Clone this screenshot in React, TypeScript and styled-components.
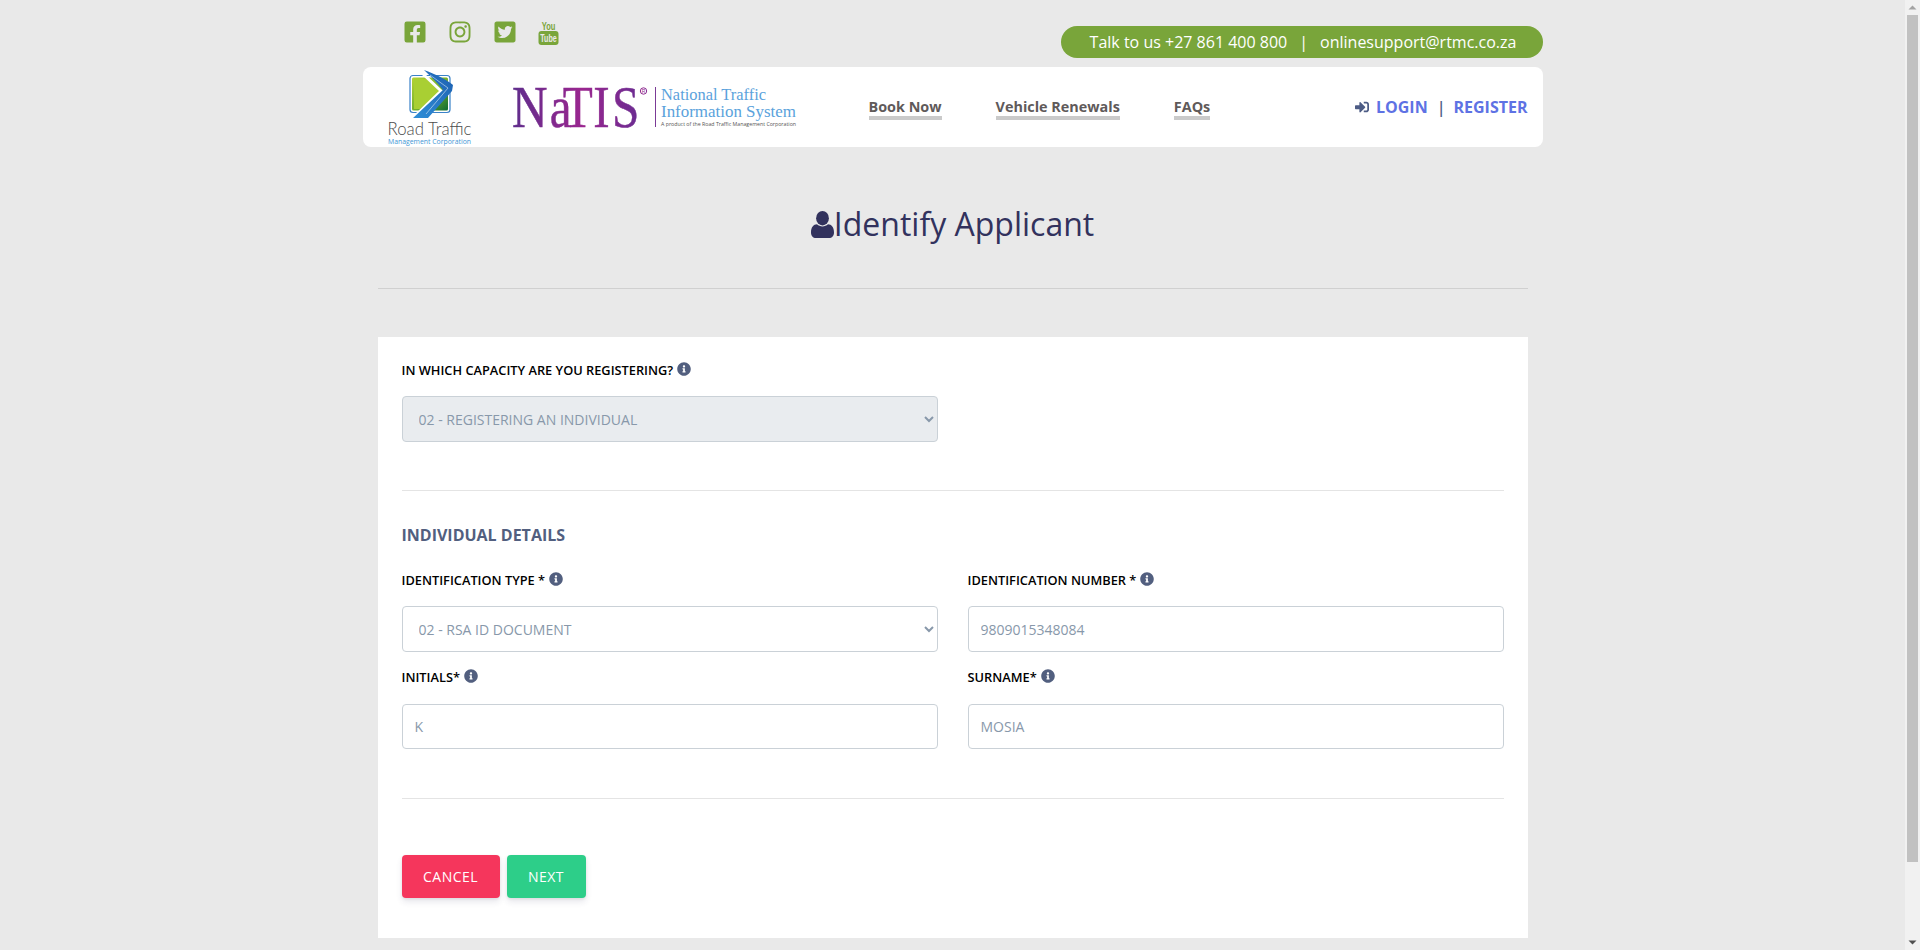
import React from "react";
import styled, { createGlobalStyle } from "styled-components";
import { FaFacebookSquare, FaInstagram, FaTwitterSquare, FaSignInAlt, FaInfoCircle } from "react-icons/fa";

const Global = createGlobalStyle`
  html, body { margin: 0; padding: 0; background: #e9e9e9; height: 100%; overflow: hidden; }
  body { font-family: "Open Sans", "Liberation Sans", sans-serif; }
  #root { height: 100%; }
  * { box-sizing: border-box; }
`;

const Shell = styled.div`
  display: flex;
  height: 100vh;
  overflow: hidden;
`;

const Page = styled.div`
  flex: 1;
  min-width: 0;
  height: 100%;
  overflow-y: auto;
  scrollbar-width: none;
  background: #e9e9e9;
`;

const Content = styled.div`
  min-height: 1032px;
  padding-bottom: 94px;
`;

const ScrollTrack = styled.aside`
  flex: none;
  width: 15px;
  height: 100%;
  background: #f1f1f1;
  display: flex;
  flex-direction: column;
  align-items: center;
`;

const ScrollButton = styled.div`
  flex: none;
  height: 15px;
  display: flex;
  align-items: center;
  justify-content: center;
`;

const ScrollThumb = styled.div`
  width: 11px;
  height: 847px;
  background: #c1c1c1;
`;

const ScrollSpacer = styled.div`
  flex: 1;
`;

const Header = styled.header`
  width: 1180px;
  margin: 0 auto;
`;

const TopBar = styled.div`
  height: 67px;
  display: flex;
  justify-content: space-between;
  align-items: flex-start;
`;

const Social = styled.div`
  display: flex;
  align-items: flex-start;
  gap: 21px;
  padding: 20px 0 0 40px;
  color: #79a53a;
  font-size: 24px;
  svg { display: block; overflow: visible; }
`;

const Pill = styled.div`
  margin-top: 26px;
  height: 32px;
  width: 482px;
  border-radius: 16px;
  background: #79a53a;
  color: #fff;
  font-size: 16px;
  font-weight: 400;
  line-height: 32px;
  display: flex;
  justify-content: center;
  gap: 12px;
  padding-left: 3px;
`;

const NavBar = styled.nav`
  height: 80px;
  background: #fff;
  border-radius: 8px;
  display: flex;
  align-items: center;
  padding: 0 15px 0 22px;
`;

const Logos = styled.div`
  display: flex;
  align-items: flex-start;
  height: 80px;
  width: 484px;
  flex: none;
  svg { overflow: visible; }
`;

const NavLinks = styled.div`
  display: flex;
  gap: 54px;
`;

const NavLink = styled.a`
  font-size: 14.4px;
  font-weight: 700;
  color: #5f5a5a;
  line-height: 18px;
  border-bottom: 4px solid #cacaca;
  margin-top: 3px;
`;

const Auth = styled.div`
  margin-left: auto;
  display: flex;
  align-items: center;
  font-size: 16px;
  font-weight: 700;
  color: #5e72e4;
  svg { color: #4d5c85; font-size: 14px; margin-right: 7px; }
`;

const Sep = styled.span`
  color: #4d5c85;
  font-weight: 600;
  margin: 0 8px 0 9px;
`;

const Main = styled.main`
  width: 1150px;
  margin: 0 auto;
`;

const Title = styled.h1`
  margin: 0;
  padding-top: 54px;
  display: flex;
  justify-content: center;
  align-items: center;
  font-size: 32px;
  line-height: 46px;
  font-weight: 400;
  color: #32325d;
  svg { flex: none; }
`;

const TitleRule = styled.hr`
  border: 0;
  border-top: 1px solid #d0d0d0;
  margin: 41px 0 0;
`;

const Card = styled.section`
  margin-top: 48px;
  background: #fff;
  padding: 23px 24px 40px;
`;

const Label = styled.label`
  display: flex;
  align-items: center;
  gap: 4px;
  height: 20px;
  font-size: 12.8px;
  font-weight: 600;
  color: #000;
  text-transform: uppercase;
  svg { color: #525f7f; font-size: 14px; margin-top: -2px; }
`;

const controlCss = `
  display: block;
  width: 100%;
  height: 46px;
  margin-top: 16px;
  border: 1px solid #cad1d7;
  border-radius: 4px;
  font-family: "Open Sans", "Liberation Sans", sans-serif;
  font-size: 14px;
  color: #8898aa;
  padding: 0 12px;
  outline: none;
  opacity: 1;
`;

const Select = styled.select<{ $locked?: boolean }>`
  ${controlCss}
  background-color: ${(p) => (p.$locked ? "#e9ecef" : "#fff")};
`;

const Input = styled.input<{ $lower?: boolean }>`
  ${controlCss}
  background: #fff;
  ${(p) => (p.$lower ? "margin-top: 17px; height: 45px;" : "")}
`;

const HalfField = styled.div`
  width: 536px;
`;

const Rule = styled.hr<{ $top: number }>`
  border: 0;
  border-top: 1px solid #e4e4e4;
  margin: ${(p) => p.$top}px 0 0;
`;

const SectionTitle = styled.h2`
  margin: 32px 0 0;
  font-size: 16px;
  line-height: 24px;
  font-weight: 700;
  color: #525f7f;
  text-transform: uppercase;
`;

const FormGrid = styled.div`
  margin-top: 23px;
  display: grid;
  grid-template-columns: 536px 536px;
  column-gap: 30px;
  row-gap: 15px;
`;

const Actions = styled.div`
  display: flex;
  gap: 7px;
  margin-top: 56px;
`;

const Button = styled.button<{ $bg: string; $w: number }>`
  width: ${(p) => p.$w}px;
  height: 43px;
  border: 0;
  border-radius: 4px;
  background: ${(p) => p.$bg};
  color: #fff;
  font-family: "Open Sans", "Liberation Sans", sans-serif;
  font-size: 14px;
  font-weight: 500;
  letter-spacing: 0.45px;
  box-shadow: 0 4px 6px rgba(50, 50, 93, 0.11), 0 1px 3px rgba(0, 0, 0, 0.08);
`;

const YoutubeIcon = () => (
  <svg width="21" height="25" viewBox="0 0 21 25">
    <text transform="translate(10.5 9.5) scale(0.72 1)" textAnchor="middle" fontFamily="Liberation Sans, sans-serif" fontWeight="700" fontSize="10.5" fill="#79a53a">You</text>
    <rect x="0.5" y="11" width="20" height="14" rx="3" fill="#79a53a" />
    <text transform="translate(10.5 22) scale(0.62 1)" textAnchor="middle" fontFamily="Liberation Sans, sans-serif" fontWeight="700" fontSize="11.5" fill="#e9e9e9">Tube</text>
  </svg>
);

const UserIcon = () => (
  <svg width="23" height="27" viewBox="0 0 23 27">
    <path d="M0 21.5 C0 16 2.5 13.4 6 13.2 C7.6 14.6 9.4 15.4 11.5 15.4 C13.6 15.4 15.4 14.6 17 13.2 C20.5 13.4 23 16 23 21.5 C23 25 21 27 18 27 L5 27 C2 27 0 25 0 21.5 Z" fill="#32325d" />
    <ellipse cx="11.5" cy="7.2" rx="6.4" ry="7.2" fill="#32325d" />
  </svg>
);

const RtmcLogo = () => (
  <svg width="90" height="80" viewBox="0 0 90 80" style={{ flex: "none" }}>
    <defs>
      <linearGradient id="lg" x1="0" x2="1" y1="0" y2="1">
        <stop offset="0" stopColor="#b6d334" />
        <stop offset="0.55" stopColor="#6fae2d" />
        <stop offset="1" stopColor="#0f6b33" />
      </linearGradient>
      <linearGradient id="rd" x1="1" x2="0" y1="0" y2="1">
        <stop offset="0" stopColor="#1d5fb0" />
        <stop offset="1" stopColor="#2f8fd8" />
      </linearGradient>
    </defs>
    <rect x="25" y="8.5" width="40" height="37" rx="3" fill="#fff" stroke="#3a82c8" strokeWidth="1.2" />
    <rect x="27" y="10.5" width="36" height="33" rx="1.5" fill="url(#lg)" />
    <path d="M29 12 L42 12 L55 25 L35 42 L29 42 Z" fill="#a9cf33" />
    <path d="M37 6 L56 24 L30 49" fill="none" stroke="#fff" strokeWidth="3" />
    <path d="M39 3 C50 7 61 12 68 18 L67 24 L43 51 L28 51 L58 23 C52 15 45 9 39 3 Z" fill="url(#rd)" />
    <path d="M45 8 L63 21 L41 47" fill="none" stroke="#fff" strokeWidth="0.7" opacity="0.7" />
    <text x="2.5" y="68" fontFamily="Lato, Open Sans, sans-serif" fontWeight="300" fontSize="18" textLength="84" lengthAdjust="spacingAndGlyphs" fill="#4c4c4c">Road Traffic</text>
    <text x="3" y="76.5" fontFamily="Open Sans, sans-serif" fontSize="7.2" textLength="83" lengthAdjust="spacingAndGlyphs" fill="#3f97d6">Management Corporation</text>
  </svg>
);

const NatisLogo = () => (
  <svg width="300" height="80" viewBox="0 0 300 80" style={{ flex: "none", marginLeft: 37 }}>
    <defs>
      <linearGradient id="pg" gradientUnits="userSpaceOnUse" x1="0" x2="156" y1="0" y2="0">
        <stop offset="0" stopColor="#5f2d8c" />
        <stop offset="0.55" stopColor="#9a268f" />
        <stop offset="1" stopColor="#6a2c91" />
      </linearGradient>
    </defs>
    <text transform="scale(0.82 1)" x="0 46 62 99 122" y="60" fontFamily="Liberation Serif, serif" fontSize="60" stroke="url(#pg)" strokeWidth="0.5" fill="url(#pg)">NaTIS</text>
    <circle cx="131.5" cy="24" r="3.2" fill="none" stroke="#8e2a90" strokeWidth="1" />
    <text x="131.5" y="26" textAnchor="middle" fontFamily="Liberation Sans, sans-serif" fontSize="5" fill="#8e2a90">R</text>
    <rect x="143" y="20" width="1" height="40" fill="#7b3a96" />
    <text x="149" y="33" fontFamily="Liberation Serif, serif" fontSize="17" textLength="105" lengthAdjust="spacingAndGlyphs" fill="#5aa2dc">National Traffic</text>
    <text x="149" y="50" fontFamily="Liberation Serif, serif" fontSize="17" textLength="135" lengthAdjust="spacingAndGlyphs" fill="#5aa2dc">Information System</text>
    <text x="149" y="59" fontFamily="Open Sans, sans-serif" fontSize="5.2" textLength="135" lengthAdjust="spacingAndGlyphs" fill="#555">A product of the Road Traffic Management Corporation</text>
  </svg>
);

export default function App() {
  return (
    <Shell>
      <Global />
      <Page>
        <Content>
          <Header>
            <TopBar>
              <Social>
                <FaFacebookSquare />
                <FaInstagram />
                <FaTwitterSquare />
                <YoutubeIcon />
              </Social>
              <Pill>
                <span>Talk to us +27 861 400 800</span>
                <span>|</span>
                <span>onlinesupport@rtmc.co.za</span>
              </Pill>
            </TopBar>
            <NavBar>
              <Logos>
                <RtmcLogo />
                <NatisLogo />
              </Logos>
              <NavLinks>
                <NavLink>Book Now</NavLink>
                <NavLink>Vehicle Renewals</NavLink>
                <NavLink>FAQs</NavLink>
              </NavLinks>
              <Auth>
                <FaSignInAlt />
                <span>LOGIN</span>
                <Sep>|</Sep>
                <span>REGISTER</span>
              </Auth>
            </NavBar>
          </Header>
          <Main>
            <Title>
              <UserIcon />
              Identify Applicant
            </Title>
            <TitleRule />
            <Card>
              <Label>
                In which capacity are you registering? <FaInfoCircle />
              </Label>
              <HalfField>
                <Select $locked disabled defaultValue="02">
                  <option value="02">02 - REGISTERING AN INDIVIDUAL</option>
                </Select>
              </HalfField>
              <Rule $top={48} />
              <SectionTitle>Individual Details</SectionTitle>
              <FormGrid>
                <div>
                  <Label>
                    Identification Type * <FaInfoCircle />
                  </Label>
                  <Select defaultValue="02">
                    <option value="02">02 - RSA ID DOCUMENT</option>
                  </Select>
                </div>
                <div>
                  <Label>
                    Identification Number * <FaInfoCircle />
                  </Label>
                  <Input defaultValue="9809015348084" />
                </div>
                <div>
                  <Label>
                    Initials* <FaInfoCircle />
                  </Label>
                  <Input $lower defaultValue="K" />
                </div>
                <div>
                  <Label>
                    Surname* <FaInfoCircle />
                  </Label>
                  <Input $lower defaultValue="MOSIA" />
                </div>
              </FormGrid>
              <Rule $top={49} />
              <Actions>
                <Button $bg="#f5365c" $w={98}>CANCEL</Button>
                <Button $bg="#2dce89" $w={79}>NEXT</Button>
              </Actions>
            </Card>
          </Main>
        </Content>
      </Page>
      <ScrollTrack>
        <ScrollButton>
          <svg width="9" height="5" viewBox="0 0 9 5"><path d="M4.5 0.5 L8.5 4.5 L0.5 4.5 Z" fill="#a3a3a3" /></svg>
        </ScrollButton>
        <ScrollThumb />
        <ScrollSpacer />
        <ScrollButton>
          <svg width="9" height="5" viewBox="0 0 9 5"><path d="M0.5 0.5 L8.5 0.5 L4.5 4.5 Z" fill="#505050" /></svg>
        </ScrollButton>
      </ScrollTrack>
    </Shell>
  );
}
